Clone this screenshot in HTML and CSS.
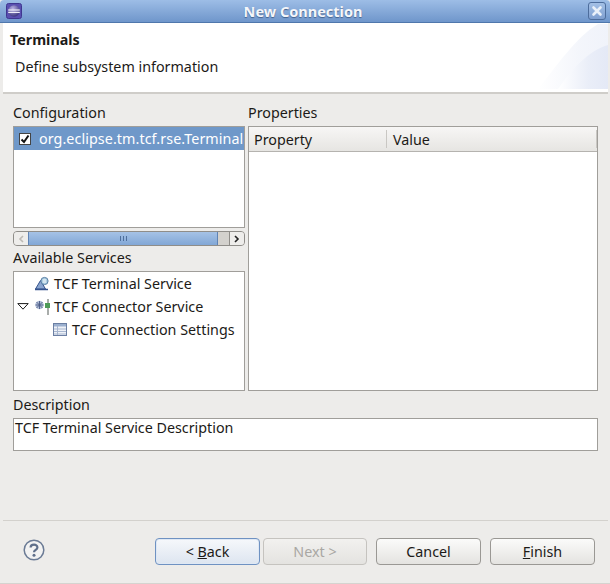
FILE: index.html
```html
<!DOCTYPE html>
<html lang="en">
    <head>
        <meta charset="UTF-8" />
        <title>New Connection</title>
        <link rel="stylesheet" href="styles.css">
    </head>
    <body>
        <div class="window">
            <div class="titlebar">
                <svg class="app-icon" width="16" height="16" viewBox="0 0 16 16">
                    <defs>
                        <radialGradient id="globe" cx="0.4" cy="0.3" r="0.8">
                            <stop offset="0" stop-color="#b9b2e6"/>
                            <stop offset="1" stop-color="#2c2670"/>
                        </radialGradient>
                    </defs>
                    <rect x="0.5" y="0.5" width="15" height="15" rx="2" fill="#5a4fb0" stroke="#3f3790"/>
                    <circle cx="8" cy="8" r="5.8" fill="url(#globe)"/>
                    <rect x="2.2" y="6.4" width="11.6" height="1.2" fill="#efeef8"/>
                    <rect x="2.2" y="8.8" width="11.6" height="1.2" fill="#efeef8"/>
                </svg>
                <span class="title">New Connection</span>
                <span class="close">
                    <svg width="12" height="12" viewBox="0 0 12 12">
                        <path d="M2.5 2.5 L9.5 9.5 M9.5 2.5 L2.5 9.5" stroke="#e9f0f9" stroke-width="2.6" stroke-linecap="round"/>
                    </svg>
                </span>
            </div>

            <div class="banner">
                <h1>Terminals</h1>
                <p>Define subsystem information</p>
                <svg class="banner-art" width="70" height="66" viewBox="0 0 70 66">
                    <defs>
                        <linearGradient id="fade" x1="0" y1="0" x2="1" y2="0">
                            <stop offset="0" stop-color="#fff"/>
                            <stop offset="0.6" stop-color="#eaeef8"/>
                            <stop offset="1" stop-color="#e4e9f6"/>
                        </linearGradient>
                    </defs>
                    <path d="M0 66 C18 44 38 14 60 1 L70 1 L70 66 Z" fill="url(#fade)" opacity="0.55"/>
                    <path d="M20 66 C34 46 50 28 70 22 L70 66 Z" fill="url(#fade)"/>
                </svg>
            </div>

            <div class="content">
                <div class="left-col">
                    <label class="caption">Configuration</label>
                    <div class="box config-list">
                        <div class="config-row">
                            <span class="checkbox">
                                <svg width="10" height="10" viewBox="0 0 10 10">
                                    <path d="M1.5 5.5 L4 8 L8.5 1.5" fill="none" stroke="#111" stroke-width="2"/>
                                </svg>
                            </span>
                            <span class="config-text">org.eclipse.tm.tcf.rse.Terminal</span>
                        </div>
                    </div>
                    <div class="scrollbar">
                        <span class="arrow arrow-left">
                            <svg width="6" height="8" viewBox="0 0 6 8"><path d="M5 1 L2 4 L5 7" fill="none" stroke="#bdbab5" stroke-width="1.6"/></svg>
                        </span>
                        <span class="thumb"><i></i><i></i><i></i></span>
                        <span class="track"></span>
                        <span class="arrow arrow-right">
                            <svg width="6" height="8" viewBox="0 0 6 8"><path d="M1 1 L4 4 L1 7" fill="none" stroke="#222" stroke-width="1.6"/></svg>
                        </span>
                    </div>
                    <label class="caption services-caption">Available Services</label>
                    <div class="box tree">
                        <div class="tree-row">
                            <svg class="tree-icon" width="16" height="16" viewBox="0 0 16 16">
                                <path d="M1.5 13 L6.5 4.5 L11.5 13 Z" fill="#8aa5cf" stroke="#34528c"/>
                                <path d="M1 13.5 H14" stroke="#34528c" stroke-width="1.5"/>
                                <circle cx="10.5" cy="5" r="3.6" fill="#a8cbe0" stroke="#5a7fa5"/>
                                <path d="M8.8 4 H12.2 M8.8 6 H12.2" stroke="#fff"/>
                            </svg>
                            <span>TCF Terminal Service</span>
                        </div>
                        <div class="tree-row">
                            <svg class="twist" width="12" height="7" viewBox="0 0 12 7">
                                <path d="M0.8 0.6 H11.2 L6 6.2 Z" fill="#fff" stroke="#1a1a1a"/>
                            </svg>
                            <svg class="tree-icon" width="16" height="16" viewBox="0 0 16 16">
                                <circle cx="5.5" cy="6" r="4.2" fill="#b4c0d8"/>
                                <path d="M2.5 3 L8.5 9 M8.5 3 L2.5 9 M1.5 6 H9.5 M5.5 2 V10" stroke="#4a5a86" stroke-width="0.9"/>
                                <rect x="13" y="0" width="2" height="16" fill="#a9adab"/>
                                <rect x="11" y="4" width="5" height="5" fill="#4d9a57"/>
                            </svg>
                            <span>TCF Connector Service</span>
                        </div>
                        <div class="tree-row child">
                            <svg class="tree-icon" width="14" height="13" viewBox="0 0 14 13">
                                <rect x="0.5" y="0.5" width="13" height="12" fill="#eef1f7" stroke="#6b7fa3"/>
                                <rect x="1" y="1" width="12" height="2.5" fill="#9bb0cf"/>
                                <path d="M1 6 H13 M1 8.5 H13 M1 11 H13" stroke="#a7b6cf"/>
                                <path d="M4.5 3 V12" stroke="#a7b6cf"/>
                            </svg>
                            <span>TCF Connection Settings</span>
                        </div>
                    </div>
                </div>

                <div class="right-col">
                    <label class="caption">Properties</label>
                    <div class="box props">
                        <div class="props-head">
                            <span class="col col-property">Property</span>
                            <span class="col col-value">Value</span>
                        </div>
                    </div>
                </div>
            </div>

            <div class="description">
                <label class="caption">Description</label>
                <div class="box desc-box">TCF Terminal Service Description</div>
            </div>

            <div class="footer">
                <svg class="help" width="22" height="22" viewBox="0 0 22 22">
                    <circle cx="11" cy="11" r="9.8" fill="#f2f2f2" stroke="#6b7b95" stroke-width="1.5"/>
                    <path d="M7.6 8.6 C7.6 4.6 14.4 4.6 14.4 8.4 C14.4 10.8 11 10.8 11 13.2" fill="none" stroke="#5f6f8a" stroke-width="2.2"/>
                    <circle cx="11" cy="16.2" r="1.5" fill="#5f6f8a"/>
                </svg>
                <div class="buttons">
                    <button class="btn btn-default">&lt; <u>B</u>ack</button>
                    <button class="btn btn-next" disabled>Next &gt;</button>
                    <button class="btn btn-cancel">Cancel</button>
                    <button class="btn"><u>F</u>inish</button>
                </div>
            </div>
        </div>
    </body>
</html>
```

FILE: styles.css
```css
html,
body {
    margin: 0;
    padding: 0;
}
body {
    font-family: "Noto Sans", "DejaVu Sans", sans-serif;
    font-size: 14.3px;
    color: #1c1a17;
    background-color: #edecea;
}
.window {
    width: 610px;
    height: 584px;
    display: flex;
    flex-direction: column;
    overflow: hidden;
    box-sizing: border-box;
    border-bottom: 1px solid #d5d3cf;
    position: relative;
}

/* title bar */
.titlebar {
    height: 23px;
    flex: none;
    display: flex;
    align-items: center;
    padding: 0 4px 0 6px;
    box-sizing: border-box;
    background: linear-gradient(#9dbde6, #6f96cb);
    border-bottom: 1px solid #4f77ac;
    border-radius: 4px 4px 0 0;
}
.title {
    flex: 1;
    text-align: center;
    font-size: 14.5px;
    font-weight: bold;
    color: #f4f6fa;
    text-shadow: 0 1px 1px #44618c;
    padding-right: 4px;
}
.close {
    width: 18px;
    height: 18px;
    display: flex;
    align-items: center;
    justify-content: center;
    box-sizing: border-box;
    border: 1px solid #4d6d9c;
    border-radius: 3px;
    background: linear-gradient(#a3c0e6, #7f9fd0);
}

/* banner */
.banner {
    height: 71px;
    flex: none;
    box-sizing: border-box;
    background-color: #fff;
    border-bottom: 2px solid #cfcdc9;
    margin: 0 2px 0 3px;
    padding: 8px 0 0 7px;
    position: relative;
}
.banner h1 {
    margin: 0;
    font-size: 14.3px;
    line-height: 17px;
}
.banner p {
    margin: 10px 0 0 5px;
    line-height: 18px;
}
.banner-art {
    position: absolute;
    right: 0;
    top: 0;
}

/* main panes */
.content {
    height: 298px;
    flex: none;
    display: flex;
    gap: 3px;
    padding: 9px 12px 0 13px;
    box-sizing: border-box;
}
.left-col {
    width: 232px;
    display: flex;
    flex-direction: column;
}
.right-col {
    flex: 1;
    display: flex;
    flex-direction: column;
}
.caption {
    display: block;
    height: 23px;
    line-height: 20px;
}
.box {
    background-color: #fff;
    border: 1px solid #a09e9a;
    box-sizing: border-box;
}
.config-list {
    height: 102px;
    overflow: hidden;
}
.config-row {
    height: 23px;
    display: flex;
    align-items: center;
    gap: 8px;
    padding-left: 5px;
    background-color: #6f98c9;
    color: #fff;
    white-space: nowrap;
}
.config-text {
    letter-spacing: 0.08px;
}
.checkbox {
    width: 10px;
    height: 10px;
    flex: none;
    display: flex;
    background-color: #fff;
    border: 1px solid #444;
}
.scrollbar {
    height: 15px;
    margin-top: 3px;
    display: flex;
    box-sizing: border-box;
    border: 1px solid #8f8d89;
    border-radius: 4px;
    background-color: #d3d1cd;
    overflow: hidden;
}
.arrow {
    width: 14px;
    flex: none;
    display: flex;
    align-items: center;
    justify-content: center;
    background-color: #eeedeb;
}
.thumb {
    width: 190px;
    flex: none;
    display: flex;
    align-items: center;
    justify-content: center;
    gap: 2px;
    background: linear-gradient(#a5c2e6, #82a7d6);
    border-left: 1px solid #5f83b5;
    border-right: 1px solid #5f83b5;
    box-sizing: border-box;
}
.thumb i {
    width: 1px;
    height: 5px;
    background-color: #4f6f9c;
}
.track {
    flex: 1;
}
.arrow-right {
    border-left: 1px solid #8f8d89;
}
.services-caption {
    height: 23px;
    padding-top: 2px;
}
.tree {
    height: 120px;
}
.tree-row {
    height: 23px;
    display: flex;
    align-items: center;
    padding-left: 20px;
    white-space: nowrap;
}
.tree-row .tree-icon {
    flex: none;
    margin-right: 4px;
}
.twist {
    flex: none;
    margin-left: -17px;
    margin-right: 5px;
}
.tree-row.child {
    padding-left: 39px;
}
.tree-row.child .tree-icon {
    margin-right: 5px;
}
.props {
    height: 265px;
}
.props-head {
    height: 25px;
    display: flex;
    align-items: center;
    box-sizing: border-box;
    background: linear-gradient(#f7f6f5, #e6e5e2);
    border-bottom: 1px solid #b5b3af;
}
.col {
    display: block;
    line-height: 17px;
    padding: 1px 0 0 5px;
    box-sizing: border-box;
}
.col-property {
    width: 138px;
    border-right: 1px solid #c9c7c3;
}
.col-value {
    flex: 1;
    padding-left: 6px;
    border-right: 1px solid #c9c7c3;
}

/* description */
.description {
    flex: none;
    padding: 3px 12px 0 13px;
}
.description .caption {
    height: 23px;
}
.desc-box {
    height: 33px;
    line-height: 17px;
    padding-left: 1px;
}

/* buttons */
.footer {
    flex: none;
    margin: 69px 2px 0 3px;
    height: 63px;
    border-top: 1px solid #d3d1cd;
    display: flex;
    align-items: flex-start;
    box-sizing: border-box;
    padding: 17px 13px 0 20px;
}
.help {
    margin-top: 1px;
}
.buttons {
    flex: 1;
    display: flex;
    justify-content: flex-end;
    gap: 3px;
}
.btn {
    width: 105px;
    height: 27px;
    padding: 0;
    font: inherit;
    color: #1c1a17;
    background: linear-gradient(#fbfbfa, #e4e3e0);
    border: 1px solid #9a9894;
    border-radius: 4px;
}
.btn-default {
    border-color: #6f92c2;
    background: linear-gradient(#f6f8fb, #dde5f0);
    box-shadow: inset 0 0 0 1px #dfe8f4;
}
.btn-next {
    width: 104px;
    color: #a9a7a3;
    border-color: #c5c3bf;
    background: linear-gradient(#f2f1ef, #e4e3e0);
}
.btn-cancel {
    margin: 0 6px;
}
```
